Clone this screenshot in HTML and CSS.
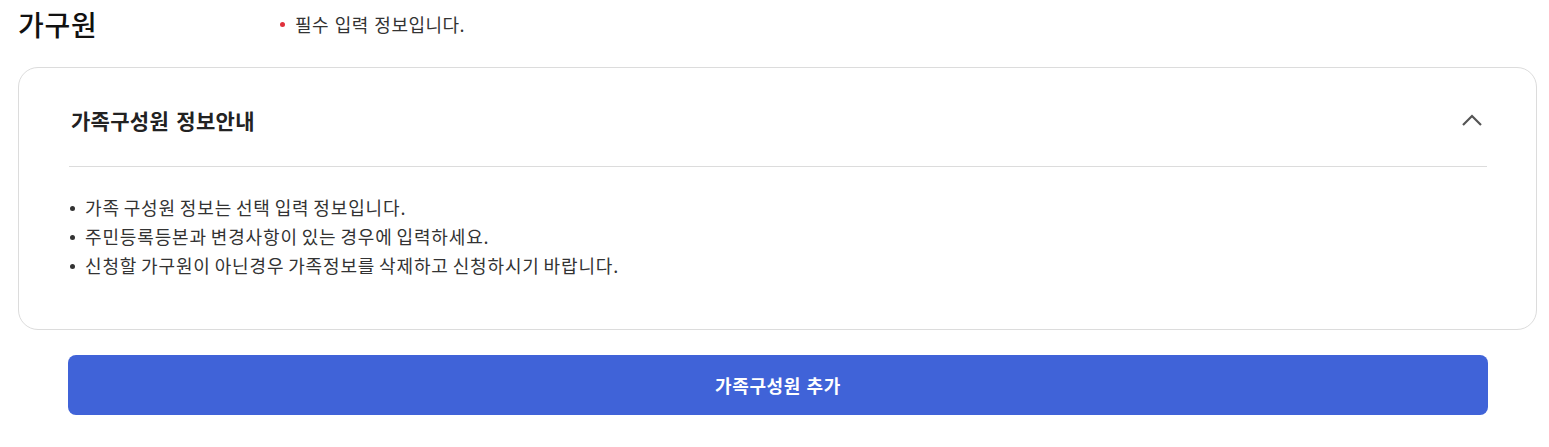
FILE: index.html
```html
<!DOCTYPE html>
<html lang="ko">
<head>
<meta charset="utf-8">
<link rel="stylesheet" href="styles.css">
</head>
<body>
<div class="page">
  <div class="top">
    <h2 class="title">가구원</h2>
    <p class="required"><span class="dot"></span>필수 입력 정보입니다.</p>
  </div>
  <section class="card">
    <div class="card-head">
      <h3 class="card-title">가족구성원 정보안내</h3>
      <svg class="chev" width="22" height="14" viewBox="0 0 22 14"><path d="M2 12 L11 3 L20 12" fill="none" stroke="#555" stroke-width="2.2"/></svg>
    </div>
    <ul class="notes">
      <li>가족 구성원 정보는 선택 입력 정보입니다.</li>
      <li>주민등록등본과 변경사항이 있는 경우에 입력하세요.</li>
      <li>신청할 가구원이 아닌경우 가족정보를 삭제하고 신청하시기 바랍니다.</li>
    </ul>
  </section>
  <div class="actions">
    <button class="add-btn">가족구성원 추가</button>
  </div>
</div>
</body>
</html>
```

FILE: styles.css
```css
* { box-sizing: border-box; }
html, body { margin: 0; padding: 0; background: #fff; }
body {
  font-family: "Noto Sans CJK KR", "Noto Sans", sans-serif;
  color: #333;
}
.page { padding: 4px 12px 0 18px; }
.top {
  display: flex;
  align-items: center;
  height: 40px;
}
.title {
  margin: 0;
  width: 262px;
  font-size: 28px;
  font-weight: 500;
  color: #111;
  line-height: 40px;
  letter-spacing: 0.7px;
}
.required {
  margin: 0;
  display: flex;
  align-items: center;
  font-size: 18px;
  letter-spacing: 0.5px;
  word-spacing: 0;
  color: #333;
}
.dot {
  width: 5px;
  height: 5px;
  border-radius: 50%;
  background: #e0303b;
  margin-right: 10px;
}
.card {
  margin-top: 23px;
  border: 1px solid #dcdcdc;
  border-radius: 20px;
  padding: 0 49px 0 50px;
}
.card-head {
  display: flex;
  align-items: center;
  justify-content: space-between;
  padding: 38px 4px 32px 2px;
  border-bottom: 1px solid #dcdcdc;
}
.card-title {
  margin: 0;
  font-size: 21px;
  font-weight: 700;
  color: #222;
  line-height: 28px;
  letter-spacing: 0.3px;
  word-spacing: 1px;
}
.chev { display: block; }
.notes {
  list-style: none;
  margin: 0;
  padding: 26px 0 49px 0;
}
.notes li {
  position: relative;
  padding-left: 16px;
  font-size: 18px;
  line-height: 29px;
  color: #333;
  letter-spacing: 0.85px;
  word-spacing: -2px;
}
.notes li::before {
  content: "";
  position: absolute;
  left: 1px;
  top: 13px;
  width: 5px;
  height: 5px;
  border-radius: 50%;
  background: #333;
}
.actions { padding: 25px 49px 0 50px; }
.add-btn {
  display: block;
  width: 100%;
  height: 60px;
  border: none;
  border-radius: 8px;
  background: #4063d8;
  color: #fff;
  font-family: "Noto Sans CJK KR", "Noto Sans", sans-serif;
  font-size: 18px;
  font-weight: 700;
  letter-spacing: 0.6px;
}
```
